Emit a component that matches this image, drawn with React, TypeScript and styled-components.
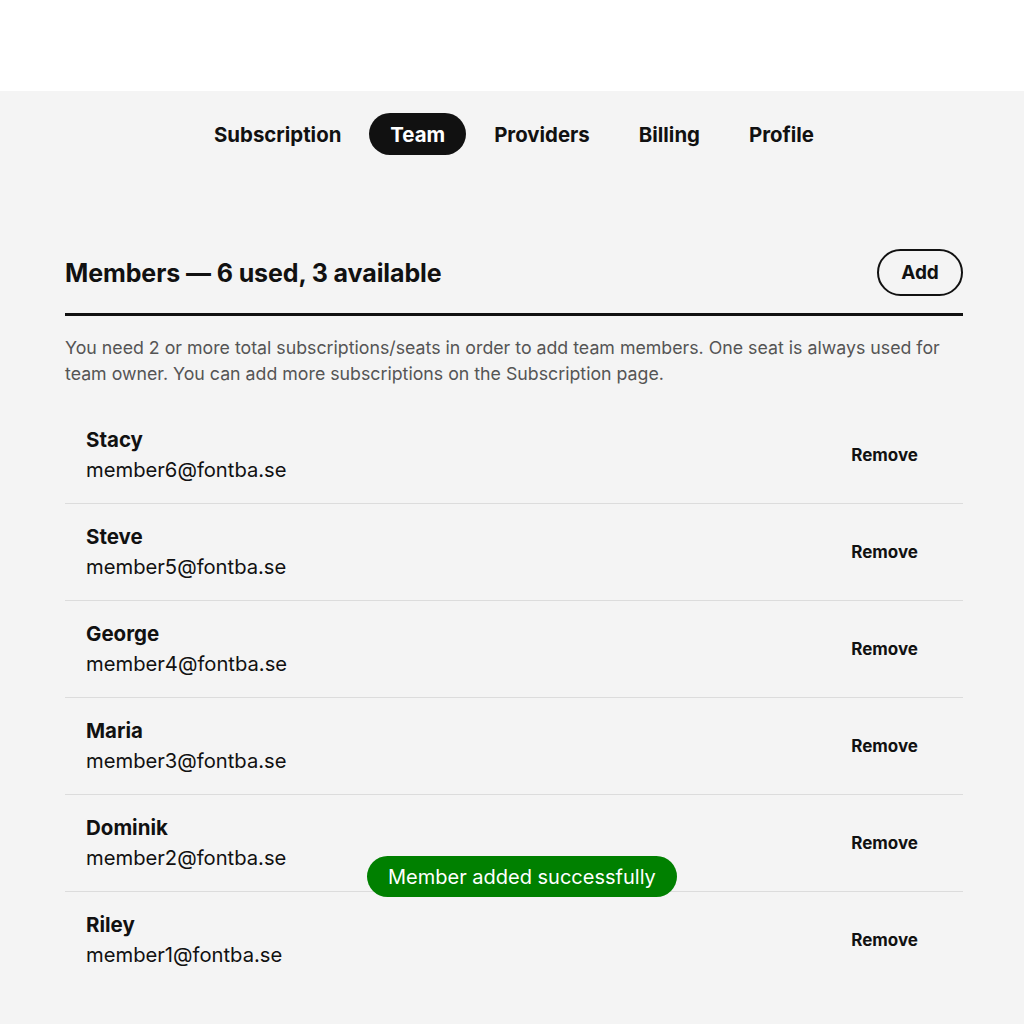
import React from "react";
import styled, { createGlobalStyle } from "styled-components";

const Global = createGlobalStyle`
  html, body { margin: 0; padding: 0; background: #ffffff; }
  body { font-family: Inter, "Noto Sans", sans-serif; color: #111111; }
  * { box-sizing: border-box; }
`;

const TopBar = styled.header`
  height: 91px;
  background: #ffffff;
`;

const Main = styled.main`
  background: #f4f4f4;
  min-height: calc(100vh - 91px);
  padding: 22px 0 36px;
`;

const Tabs = styled.nav`
  display: flex;
  justify-content: center;
  gap: 7px;
  padding-left: 4px;
`;

const Tab = styled.button<{ $active?: boolean }>`
  height: 42px;
  padding: 0 21px;
  border: none;
  border-radius: 21px;
  font-family: Inter, sans-serif;
  font-size: 20.4px;
  font-weight: 700;
  background: ${(p) => (p.$active ? "#111111" : "transparent")};
  color: ${(p) => (p.$active ? "#ffffff" : "#111111")};
  cursor: pointer;
`;

const Section = styled.section`
  width: 898px;
  margin: 94px 0 0 65px;
`;

const Header = styled.div`
  display: flex;
  align-items: center;
  justify-content: space-between;
  padding-bottom: 17px;
  border-bottom: 3px solid #111111;
`;

const Title = styled.h2`
  margin: 0;
  font-size: 25px;
  font-weight: 700;
  letter-spacing: -0.1px;
`;

const AddButton = styled.button`
  width: 86px;
  height: 47px;
  border: 2.5px solid #111111;
  border-radius: 24px;
  background: transparent;
  font-family: Inter, sans-serif;
  font-size: 19px;
  font-weight: 700;
  color: #111111;
`;

const Description = styled.p`
  margin: 19px 0 20px;
  font-size: 17.75px;
  line-height: 26px;
  color: #555555;
`;

const List = styled.ul`
  list-style: none;
  margin: 0;
  padding: 0;
`;

const Row = styled.li<{ $last?: boolean }>`
  display: flex;
  align-items: center;
  justify-content: space-between;
  padding: 18px 24px 18px 21px;
  border-bottom: ${(p) => (p.$last ? "none" : "1px solid #dcdcdc")};
`;

const Person = styled.div`
  display: flex;
  flex-direction: column;
`;

const Name = styled.span`
  font-size: 20.5px;
  line-height: 30px;
  font-weight: 650;
`;

const Email = styled.span`
  font-size: 20.2px;
  line-height: 30px;
  font-weight: 400;
`;

const RemoveButton = styled.button`
  border: none;
  background: transparent;
  padding: 0 21px;
  font-family: Inter, sans-serif;
  font-size: 17px;
  font-weight: 700;
  color: #111111;
`;

const Toast = styled.div`
  position: fixed;
  left: 367px;
  top: 856px;
  height: 41px;
  padding: 0 21px;
  display: flex;
  align-items: center;
  border-radius: 21px;
  background: #008000;
  color: #ffffff;
  font-size: 20px;
  font-weight: 400;
`;

const members = [
  { name: "Stacy", email: "member6@fontba.se" },
  { name: "Steve", email: "member5@fontba.se" },
  { name: "George", email: "member4@fontba.se" },
  { name: "Maria", email: "member3@fontba.se" },
  { name: "Dominik", email: "member2@fontba.se" },
  { name: "Riley", email: "member1@fontba.se" },
];

const tabs = ["Subscription", "Team", "Providers", "Billing", "Profile"];

export default function App() {
  return (
    <>
      <Global />
      <TopBar />
      <Main>
        <Tabs>
          {tabs.map((t) => (
            <Tab key={t} $active={t === "Team"}>
              {t}
            </Tab>
          ))}
        </Tabs>
        <Section>
          <Header>
            <Title>Members — 6 used, 3 available</Title>
            <AddButton>Add</AddButton>
          </Header>
          <Description>
            You need 2 or more total subscriptions/seats in order to add team members. One seat is always used for
            team owner. You can add more subscriptions on the Subscription page.
          </Description>
          <List>
            {members.map((m, i) => (
              <Row key={m.email} $last={i === members.length - 1}>
                <Person>
                  <Name>{m.name}</Name>
                  <Email>{m.email}</Email>
                </Person>
                <RemoveButton>Remove</RemoveButton>
              </Row>
            ))}
          </List>
        </Section>
      </Main>
      <Toast>Member added successfully</Toast>
    </>
  );
}
